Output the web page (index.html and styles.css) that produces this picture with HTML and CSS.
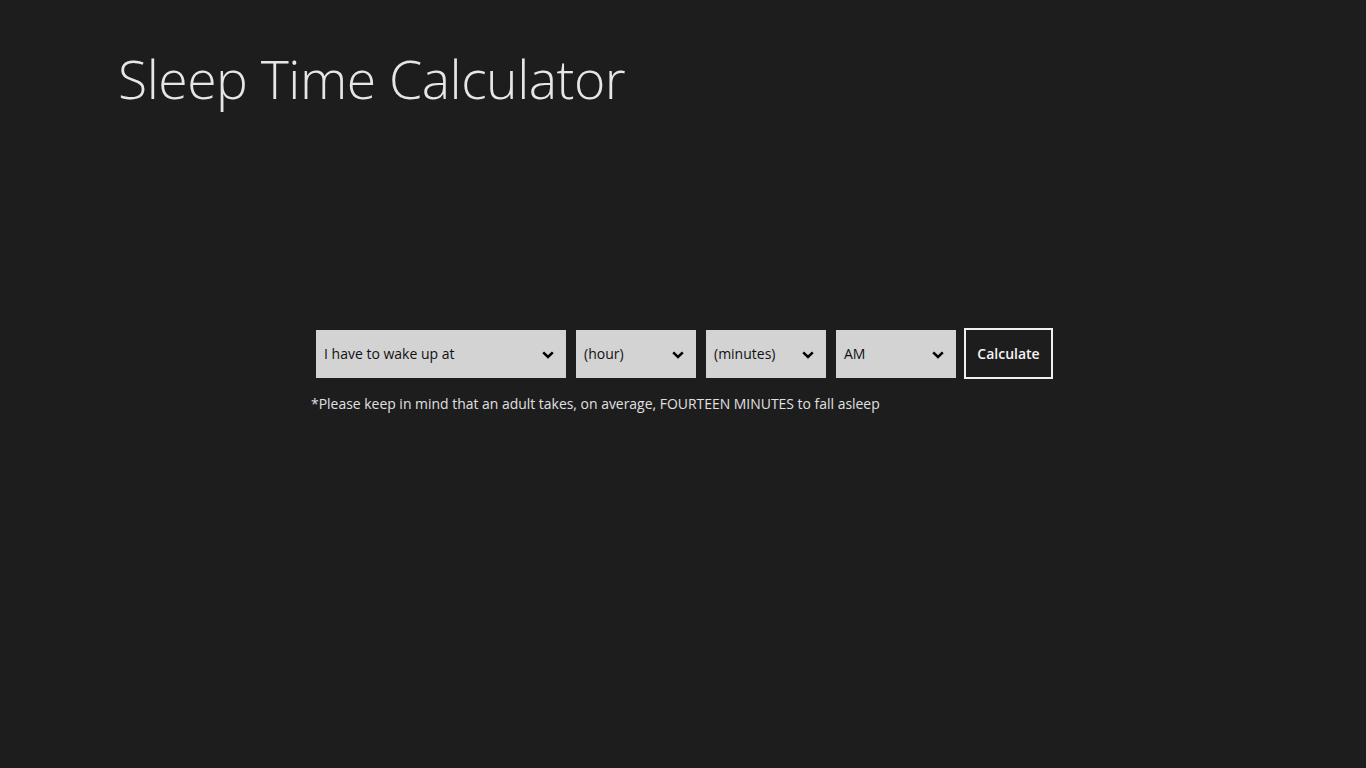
FILE: index.html
```html
<!DOCTYPE html>
<html lang="en">
<head>
<meta charset="utf-8">
<title>Sleep Time Calculator</title>
<link rel="stylesheet" href="styles.css">
</head>
<body>
<header class="page-header">
  <h1 class="page-title">Sleep Time Calculator</h1>
</header>
<main class="content">
  <div class="form-row">
    <div class="combo combo-wide" role="combobox">
      <span class="combo-text">I have to wake up at</span>
      <svg class="chev" viewBox="0 0 12 8" width="12" height="8"><path d="M1.2 1.3 L6 6 L10.8 1.3" fill="none" stroke="#000" stroke-width="2.5"/></svg>
    </div>
    <div class="combo" role="combobox">
      <span class="combo-text">(hour)</span>
      <svg class="chev" viewBox="0 0 12 8" width="12" height="8"><path d="M1.2 1.3 L6 6 L10.8 1.3" fill="none" stroke="#000" stroke-width="2.5"/></svg>
    </div>
    <div class="combo" role="combobox">
      <span class="combo-text">(minutes)</span>
      <svg class="chev" viewBox="0 0 12 8" width="12" height="8"><path d="M1.2 1.3 L6 6 L10.8 1.3" fill="none" stroke="#000" stroke-width="2.5"/></svg>
    </div>
    <div class="combo" role="combobox">
      <span class="combo-text">AM</span>
      <svg class="chev" viewBox="0 0 12 8" width="12" height="8"><path d="M1.2 1.3 L6 6 L10.8 1.3" fill="none" stroke="#000" stroke-width="2.5"/></svg>
    </div>
    <button class="calc-btn" type="button">Calculate</button>
  </div>
  <p class="note">*Please keep in mind that an adult takes, on average, FOURTEEN MINUTES to fall asleep</p>
</main>
</body>
</html>
```

FILE: styles.css
```css
html, body {
  margin: 0;
  padding: 0;
  background: #1d1d1d;
  height: 100%;
}
body {
  font-family: "Open Sans", "Noto Sans", "Liberation Sans", sans-serif;
  color: #e8e8e8;
}
.page-header {
  padding: 43px 0 0 118px;
}
.page-title {
  margin: 0;
  font-weight: 300;
  font-size: 53.5px;
  line-height: 72px;
  color: #e6e6e6;
  letter-spacing: -0.5px;
}
.content {
  padding: 213px 0 0 311px;
}
.form-row {
  display: flex;
  align-items: center;
  margin-left: 5px;
  height: 51px;
}
.combo {
  box-sizing: border-box;
  width: 120px;
  height: 48px;
  background: #d3d3d3;
  display: flex;
  align-items: center;
  justify-content: space-between;
  padding: 0 12px 0 8px;
  margin-right: 10px;
  color: #111;
  font-size: 14px;
}
.combo-wide {
  width: 250px;
}
.combo:nth-child(4) {
  margin-right: 8px;
}
.chev {
  display: block;
  margin-top: 2px;
}
.calc-btn {
  box-sizing: border-box;
  height: 51px;
  width: 89px;
  background: transparent;
  border: 2px solid #f0f0f0;
  color: #f4f4f4;
  font-family: inherit;
  font-size: 14px;
  font-weight: 600;
  padding: 0;
}
.note {
  margin: 15px 0 0 0;
  font-size: 13.95px;
  color: #e0e0e0;
}
```
